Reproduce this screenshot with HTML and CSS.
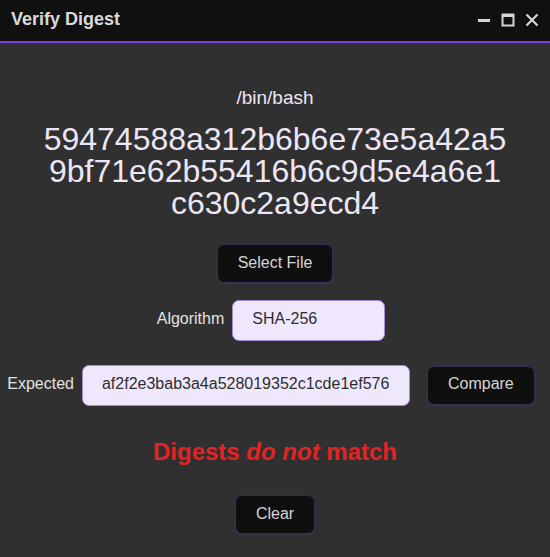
FILE: index.html
```html
<!DOCTYPE html>
<html>
<head>
<meta charset="utf-8">
<link rel="stylesheet" href="styles.css">
</head>
<body>
<div class="window">
  <header class="titlebar">
    <span class="title">Verify Digest</span>
    <div class="controls">
      <svg class="ctl" width="14" height="14" viewBox="0 0 14 14"><rect x="1" y="6" width="12" height="3" fill="#d6d6d6"/></svg>
      <svg class="ctl" width="14" height="14" viewBox="0 0 14 14"><rect x="1.5" y="1.5" width="11" height="11" fill="none" stroke="#d6d6d6" stroke-width="2"/><rect x="1" y="1" width="12" height="3" fill="#d6d6d6"/></svg>
      <svg class="ctl" width="14" height="14" viewBox="0 0 14 14"><path d="M1.5 1.5 L12.5 12.5 M12.5 1.5 L1.5 12.5" stroke="#d6d6d6" stroke-width="2.2"/></svg>
    </div>
  </header>
  <main class="content">
    <div class="path">/bin/bash</div>
    <div class="digest">59474588a312b6b6e73e5a42a59bf71e62b55416b6c9d5e4a6e1c630c2a9ecd4</div>
    <button class="btn select">Select File</button>
    <div class="row algo-row">
      <label class="lbl">Algorithm</label>
      <input class="field algo" type="text" value="SHA-256">
    </div>
    <div class="row expected-row">
      <label class="lbl">Expected</label>
      <input class="field expected" type="text" value="af2f2e3bab3a4a528019352c1cde1ef576">
      <button class="btn compare">Compare</button>
    </div>
    <div class="result">Digests <em>do not</em> match</div>
    <button class="btn clear">Clear</button>
  </main>
</div>
</body>
</html>
```

FILE: styles.css
```css
* { box-sizing: border-box; }
html, body {
  margin: 0;
  padding: 0;
  background: #303030;
  font-family: "Liberation Sans", Arial, sans-serif;
}
.window {
  width: 550px;
  height: 557px;
  background: #303030;
  display: flex;
  flex-direction: column;
}
.titlebar {
  height: 43px;
  background: #101010;
  border-bottom: 2px solid #7b3fe4;
  display: flex;
  align-items: center;
  justify-content: space-between;
  padding: 0 11px 0 11px;
}
.title {
  color: #d9d9d9;
  font-weight: bold;
  font-size: 18px;
  margin-top: -2px;
}
.controls {
  display: flex;
  gap: 10px;
  align-items: center;
  margin-top: -2px;
}
.ctl { display: block; }
.content {
  display: flex;
  flex-direction: column;
  align-items: center;
}
.path {
  margin-top: 44px;
  font-size: 19px;
  line-height: 22px;
  color: #ece6f6;
}
.digest {
  margin-top: 14px;
  width: 464px;
  font-size: 32px;
  line-height: 32px;
  color: #ece6f6;
  text-align: center;
  word-break: break-all;
}
.btn {
  font-family: "Liberation Sans", Arial, sans-serif;
  font-size: 16px;
  line-height: 17px;
  height: 39px;
  padding: 9px 20px 11px;
  background: #0f0f0f;
  color: #d6d6d6;
  border: 1px solid #3a2c58;
  border-radius: 7px;
  box-shadow: 0 1px 2px rgba(90, 60, 150, 0.35);
}
.select { margin-top: 25px; }
.row {
  display: flex;
  align-items: center;
  justify-content: center;
  gap: 8px;
  padding-right: 8px;
  width: 100%;
}
.algo-row { margin-top: 17px; }
.expected-row { margin-top: 24px; }
.lbl {
  font-size: 16px;
  color: #e2e2e2;
  margin-top: -4px;
}
.field {
  font-family: "Liberation Sans", Arial, sans-serif;
  font-size: 16px;
  color: #2e2e2e;
  background: #efe8fd;
  border: 1px solid #a58ad8;
  border-radius: 7px;
  height: 41px;
  padding: 0 19px 3px;
  outline: none;
}
.algo { width: 153px; }
.expected { width: 328px; }
.compare {
  margin-left: 9px;
  padding-top: 8px;
  padding-bottom: 12px;
}
.result {
  margin-top: 32px;
  font-size: 24px;
  line-height: 28px;
  font-weight: bold;
  color: #e32424;
}
.result em { font-style: italic; }
.clear { margin-top: 29px; }
```
